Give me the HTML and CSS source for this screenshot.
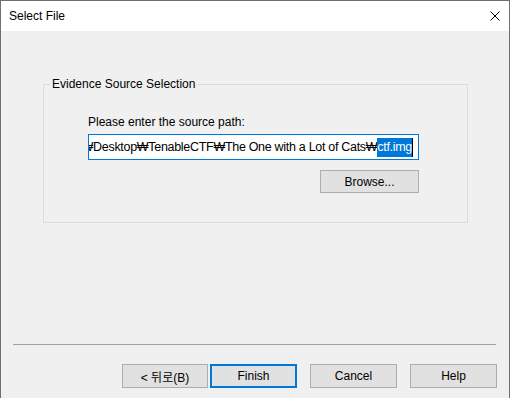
FILE: index.html
```html
<!DOCTYPE html>
<html>

<head lang="en">
  <meta charset="UTF-8">
  <title>Select File</title>
  <link rel="stylesheet" href="styles.css">
</head>

<body>
  <div class="window">
    <div class="titlebar">
      <span class="title">Select File</span>
      <svg class="close" width="10" height="10" viewBox="0 0 10 10">
        <path d="M0.5 0.5 L9.5 9.5 M9.5 0.5 L0.5 9.5" stroke="#000" stroke-width="1" fill="none"/>
      </svg>
    </div>
    <div class="content">
      <fieldset class="group">
        <legend>Evidence Source Selection</legend>
        <div class="group-body">
          <label class="path-label">Please enter the source path:</label>
          <div class="path-input">
            <span class="path-text">C:₩Users₩Analyst₩Desktop₩TenableCTF₩The One with a Lot of Cats₩<span class="sel">ctf.img</span><span class="caret"></span></span>
          </div>
          <div class="browse-row">
            <button class="btn browse">Browse...</button>
          </div>
        </div>
      </fieldset>
    </div>
    <div class="footer">
      <div class="separator"></div>
      <div class="buttons">
        <button class="btn back">&lt; 뒤로(B)</button>
        <button class="btn default">Finish</button>
        <button class="btn gap">Cancel</button>
        <button class="btn gap">Help</button>
      </div>
    </div>
  </div>
</body>

</html>
```

FILE: styles.css
```css
html,
body {
  margin: 0px;
  padding: 0px;
}

body {
  font-family: "Liberation Sans", "Noto Sans CJK KR", sans-serif;
  font-size: 12px;
  color: #000000;
}

.window {
  width: 510px;
  height: 398px;
  box-sizing: border-box;
  border: 1px solid #707070;
  border-bottom: none;
  background: #f0f0f0;
  display: flex;
  flex-direction: column;
}

.titlebar {
  height: 30px;
  background: #ffffff;
  display: flex;
  align-items: center;
  justify-content: space-between;
  padding: 0px 9px 0px 8px;
  flex-shrink: 0;
}

.title {
  font-size: 12px;
}

.close {
  display: block;
}

.content {
  padding: 45px 0px 0px 42px;
}

.group {
  width: 425px;
  height: 147px;
  box-sizing: border-box;
  margin: 0px;
  padding: 0px;
  border: 1px solid #dcdcdc;
}

.group legend {
  margin-left: 6px;
  padding: 0px 2px;
  line-height: 16px;
}

.group-body {
  padding: 22px 0px 0px 44px;
}

.path-label {
  display: block;
  line-height: 16px;
}

.path-input {
  margin-top: 4px;
  width: 331px;
  height: 26px;
  box-sizing: border-box;
  border: 1px solid #0078d7;
  background: #ffffff;
  overflow: hidden;
  display: flex;
  justify-content: flex-end;
  align-items: center;
  padding-right: 5px;
}

.path-text {
  white-space: nowrap;
  font-size: 12.5px;
  letter-spacing: -0.3px;
  display: flex;
  align-items: center;
}

.sel {
  background: #0078d7;
  color: #ffffff;
  line-height: 19px;
}

.caret {
  display: inline-block;
  width: 1px;
  height: 19px;
  background: #000000;
}

.browse-row {
  width: 331px;
  display: flex;
  justify-content: flex-end;
  margin-top: 10px;
}

.btn {
  font-family: "Liberation Sans", "Noto Sans CJK KR", sans-serif;
  font-size: 12px;
  color: #000000;
  background: #e1e1e1;
  border: 1px solid #adadad;
  width: 87px;
  height: 24px;
  padding: 0px;
  margin: 0px;
  box-sizing: border-box;
}

.btn.back {
  width: 86px;
}

.browse {
  width: 99px;
  height: 23px;
}

.btn.default {
  border: 2px solid #0078d7;
  margin-left: 2px;
}

.btn.gap {
  margin-left: 13px;
}

.footer {
  margin-top: auto;
  padding-bottom: 10px;
}

.separator {
  margin: 0px 13px 0px 12px;
  height: 1px;
  background: #a0a0a0;
}

.buttons {
  display: flex;
  justify-content: flex-end;
  padding: 19px 12px 0px 0px;
}
```
